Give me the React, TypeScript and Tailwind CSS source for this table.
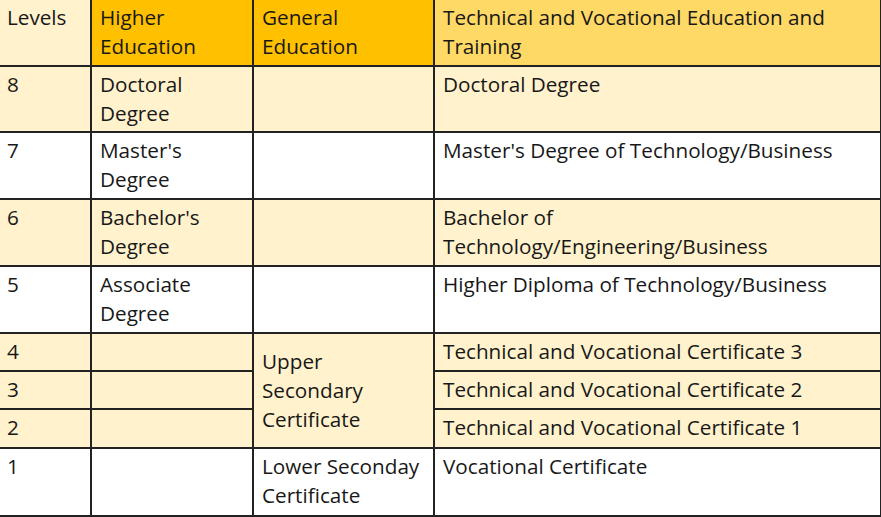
import React from "react";

type Row = {
  level: string;
  higher: string[];
  general?: string[];
  tvet: string[];
  h: string;
  tint: boolean;
};

const rows: Row[] = [
  { level: "8", higher: ["Doctoral", "Degree"], general: [], tvet: ["Doctoral Degree"], h: "h-[66px]", tint: true },
  { level: "7", higher: ["Master's", "Degree"], general: [], tvet: ["Master's Degree of Technology/Business"], h: "h-[67px]", tint: false },
  { level: "6", higher: ["Bachelor's", "Degree"], general: [], tvet: ["Bachelor of", "Technology/Engineering/Business"], h: "h-[67px]", tint: true },
  { level: "5", higher: ["Associate", "Degree"], general: [], tvet: ["Higher Diploma of Technology/Business"], h: "h-[67px]", tint: false },
  { level: "4", higher: [], general: ["Upper", "Secondary", "Certificate"], tvet: ["Technical and Vocational Certificate 3"], h: "h-[38px]", tint: true },
  { level: "3", higher: [], tvet: ["Technical and Vocational Certificate 2"], h: "h-[38px]", tint: true },
  { level: "2", higher: [], tvet: ["Technical and Vocational Certificate 1"], h: "h-[39px]", tint: true },
  { level: "1", higher: [], general: ["Lower Seconday", "Certificate"], tvet: ["Vocational Certificate"], h: "h-[68px]", tint: false },
];

const cell = "border-b-2 border-r-2 border-[#222] px-[8px] pt-[3px] align-top";

function Lines({ text }: { text: string[] }) {
  return (
    <>
      {text.map((t, i) => (
        <div key={i} className="whitespace-nowrap">
          {t}
        </div>
      ))}
    </>
  );
}

export default function App() {
  return (
    <div className="w-[881px] h-[517px] overflow-hidden bg-white">
      <table
        className="table-fixed border-collapse w-[881px] text-[20.7px] leading-[29px] text-[#181818]"
        style={{ fontFamily: "'Open Sans', Lato, sans-serif" }}
      >
        <colgroup>
          <col className="w-[91px]" />
          <col className="w-[162px]" />
          <col className="w-[181px]" />
          <col className="w-[447px]" />
        </colgroup>
        <thead>
          <tr className="h-[66px]">
            <th className={`${cell} text-left font-normal bg-[#fff2cc] pl-[7px]`}>Levels</th>
            <th className={`${cell} text-left font-normal bg-[#ffc000]`}>
              <Lines text={["Higher", "Education"]} />
            </th>
            <th className={`${cell} text-left font-normal bg-[#ffc000]`}>
              <Lines text={["General", "Education"]} />
            </th>
            <th className={`${cell} text-left font-normal bg-[#ffd966]`}>
              <Lines text={["Technical and Vocational Education and", "Training"]} />
            </th>
          </tr>
        </thead>
        <tbody>
          {rows.map((r) => {
            const bg = r.tint ? "bg-[#fff2cc]" : "bg-white";
            const merged = r.general && r.general.length === 3;
            return (
              <tr key={r.level} className={`${r.h} ${bg}`}>
                <td className={`${cell} pl-[7px]`}>{r.level}</td>
                <td className={cell}>
                  <Lines text={r.higher} />
                </td>
                {r.general && (
                  <td
                    rowSpan={merged ? 3 : 1}
                    className={merged ? "border-b-2 border-r-2 border-[#222] px-[8px] align-middle bg-[#fff2cc]" : cell}
                  >
                    <Lines text={r.general} />
                  </td>
                )}
                <td className={cell}>
                  <Lines text={r.tvet} />
                </td>
              </tr>
            );
          })}
        </tbody>
      </table>
    </div>
  );
}
